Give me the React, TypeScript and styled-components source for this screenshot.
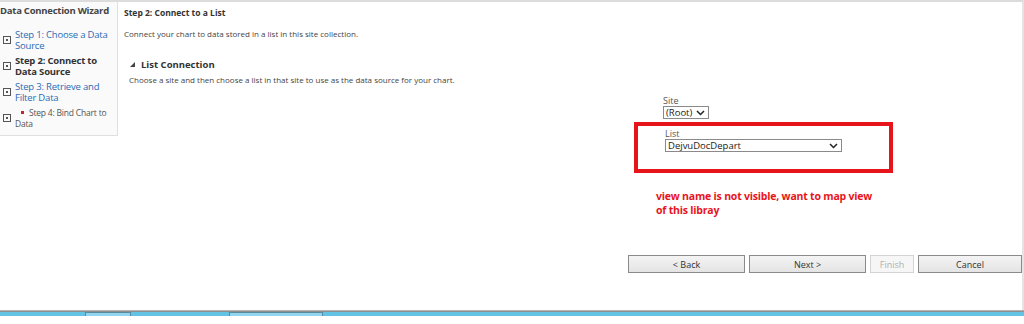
import React from 'react';
import styled, { createGlobalStyle } from 'styled-components';

const GlobalStyle = createGlobalStyle`
  html, body {
    margin: 0;
    padding: 0;
    background: #ffffff;
  }
  body {
    font-family: "Open Sans", "Noto Sans", sans-serif;
    color: #444444;
  }
`;

const Screen = styled.div`
  width: 1024px;
  height: 324px;
  display: flex;
  flex-direction: column;
  overflow: hidden;
  background: #ffffff;
`;

const Window = styled.div`
  flex: 1;
  display: flex;
  border-top: 2px solid #dcdcdc;
  border-right: 2px solid #e4e4e4;
`;

const Sidebar = styled.div`
  width: 118px;
  height: 134px;
  flex-shrink: 0;
  background: #fafafa;
  border-right: 1px solid #e0e0e0;
  border-bottom: 1px solid #e0e0e0;
  box-sizing: border-box;
  overflow: hidden;
`;

const SidebarTitle = styled.div`
  font-size: 9.5px;
  font-weight: 700;
  color: #444444;
  letter-spacing: -0.25px;
  white-space: nowrap;
  padding: 2px 0 0 0;
  height: 27px;
  box-sizing: border-box;
`;

const StepList = styled.ul`
  list-style: none;
  margin: 0;
  padding: 0;
  display: flex;
  flex-direction: column;
  gap: 4px;
`;

const Step = styled.li<{ $state: 'link' | 'current' | 'pending' }>`
  display: flex;
  align-items: center;
  gap: 4px;
  padding-left: 3px;
  white-space: nowrap;
  font-size: ${({ $state }) => ($state === 'pending' ? '8.5px' : '9.5px')};
  line-height: 11px;
  font-weight: ${({ $state }) => ($state === 'current' ? 700 : 400)};
  color: ${({ $state }) =>
    $state === 'link' ? '#2a6ab5' : $state === 'current' ? '#333333' : '#555555'};
  letter-spacing: -0.2px;
`;

const StepBox = styled.span`
  width: 6px;
  height: 6px;
  flex-shrink: 0;
  border: 1px solid #555555;
  position: relative;
  &::after {
    content: '';
    position: absolute;
    left: 2px;
    top: 2px;
    width: 2px;
    height: 2px;
    background: #555555;
  }
`;

const Bullet = styled.span`
  display: inline-block;
  width: 3px;
  height: 3px;
  background: #c0262c;
  margin: 0 5px 2px 6px;
  vertical-align: middle;
`;

const Main = styled.div`
  flex: 1;
  display: flex;
  flex-direction: column;
  padding-left: 6px;
`;

const PageTitle = styled.div`
  font-size: 8.5px;
  font-weight: 700;
  color: #333333;
  padding-top: 5px;
  height: 26px;
  box-sizing: border-box;
`;

const Intro = styled.div`
  font-size: 8px;
  color: #444444;
`;

const SectionTitle = styled.div`
  display: flex;
  align-items: center;
  gap: 6px;
  margin: 19px 0 0 6px;
  font-size: 9.5px;
  font-weight: 700;
  color: #333333;
`;

const Triangle = styled.span`
  width: 0;
  height: 0;
  border-left: 5px solid transparent;
  border-bottom: 5px solid #444444;
`;

const SectionText = styled.div`
  font-size: 8px;
  color: #444444;
  margin: 3px 0 0 5px;
`;

const FormArea = styled.div`
  display: flex;
  flex-direction: column;
  margin: 11px 0 0 510px;
  width: 259px;
`;

const Field = styled.div`
  display: flex;
  flex-direction: column;
  align-items: flex-start;
  padding-left: 29px;
`;

const Label = styled.div`
  font-size: 9px;
  color: #555555;
  line-height: 10px;
`;

const Select = styled.div<{ $width: number }>`
  width: ${({ $width }) => $width}px;
  height: 13px;
  box-sizing: border-box;
  border: 1px solid #8a8a8a;
  display: flex;
  align-items: center;
  justify-content: space-between;
  padding: 0 3px 0 2px;
  font-size: 9.5px;
  color: #222222;
  background: #ffffff;
`;

const Annotation = styled.div`
  margin-top: 3px;
  height: 51px;
  box-sizing: border-box;
  border: 4px solid #e8141b;
  padding-top: 3px;
  & > div {
    padding-left: 27px;
  }
`;

const Note = styled.div`
  margin: 16px 0 0 22px;
  font-size: 10.5px;
  font-weight: 700;
  line-height: 14px;
  color: #e8141b;
  letter-spacing: -0.2px;
`;

const ButtonRow = styled.div`
  display: flex;
  justify-content: flex-end;
  gap: 4px;
  margin-top: auto;
  margin-bottom: 37px;
`;

const Button = styled.button<{ $width: number }>`
  width: ${({ $width }) => $width}px;
  height: 18px;
  box-sizing: border-box;
  border: 1px solid ${({ disabled }) => (disabled ? '#d4d4d4' : '#8a8a8a')};
  background: ${({ disabled }) =>
    disabled ? '#f6f6f6' : 'linear-gradient(#f4f4f4, #e4e4e4)'};
  font-family: "Open Sans", "Noto Sans", sans-serif;
  font-size: 9px;
  color: ${({ disabled }) => (disabled ? '#b0b0b0' : '#333333')};
  padding: 0;
  margin: 0;
`;

const Taskbar = styled.div`
  height: 13px;
  flex-shrink: 0;
  border-top: 1px solid #b4b4b4;
  position: relative;
  background: linear-gradient(#8f8f8f 0 1px, #62c3e4 1px 5px, #ffffff 5px);
`;

const TaskTab = styled.div<{ $left: number; $width: number }>`
  position: absolute;
  top: 1px;
  left: ${({ $left }) => $left}px;
  width: ${({ $width }) => $width}px;
  height: 4px;
  box-sizing: border-box;
  border: 1px solid #5a8aa0;
  border-bottom: none;
  background: #8fd6ee;
`;

const Chevron = () => (
  <svg width="9" height="6" viewBox="0 0 9 6">
    <path d="M1 1 L4.5 4.5 L8 1" fill="none" stroke="#222" strokeWidth="1.5" />
  </svg>
);

const App = () => {
  return (
    <Screen>
      <GlobalStyle />
      <Window>
        <Sidebar>
          <SidebarTitle>Data Connection Wizard</SidebarTitle>
          <StepList>
            <Step $state="link">
              <StepBox />
              <span>Step 1: Choose a Data<br />Source</span>
            </Step>
            <Step $state="current">
              <StepBox />
              <span>Step 2: Connect to<br />Data Source</span>
            </Step>
            <Step $state="link">
              <StepBox />
              <span>Step 3: Retrieve and<br />Filter Data</span>
            </Step>
            <Step $state="pending">
              <StepBox />
              <span><Bullet />Step 4: Bind Chart to<br />Data</span>
            </Step>
          </StepList>
        </Sidebar>
        <Main>
          <PageTitle>Step 2: Connect to a List</PageTitle>
          <Intro>Connect your chart to data stored in a list in this site collection.</Intro>
          <SectionTitle>
            <Triangle />
            List Connection
          </SectionTitle>
          <SectionText>
            Choose a site and then choose a list in that site to use as the data source for your chart.
          </SectionText>
          <FormArea>
            <Field>
              <Label>Site</Label>
              <Select $width={46}>
                (Root) <Chevron />
              </Select>
            </Field>
            <Annotation>
              <Field>
                <Label>List</Label>
                <Select $width={177}>
                  DejvuDocDepart <Chevron />
                </Select>
              </Field>
            </Annotation>
            <Note>
              view name is not visible, want to map view
              <br />
              of this libray
            </Note>
          </FormArea>
          <ButtonRow>
            <Button $width={117}>&lt; Back</Button>
            <Button $width={117}>Next &gt;</Button>
            <Button $width={44} disabled>Finish</Button>
            <Button $width={104}>Cancel</Button>
          </ButtonRow>
        </Main>
      </Window>
      <Taskbar>
        <TaskTab $left={85} $width={46} />
        <TaskTab $left={229} $width={94} />
      </Taskbar>
    </Screen>
  );
};

export default App;
